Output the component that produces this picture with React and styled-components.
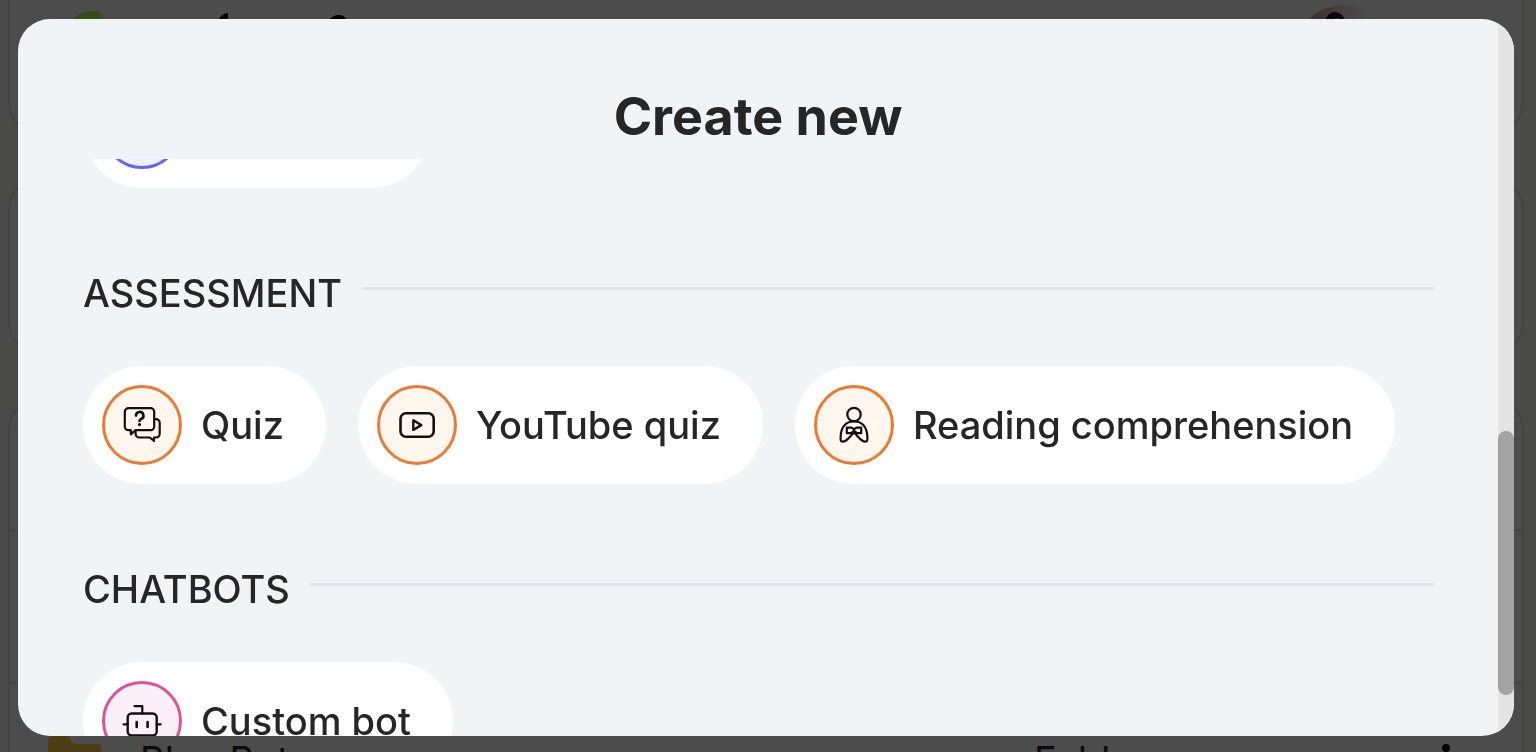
import { useLayoutEffect, useRef } from "react"
import styled, { createGlobalStyle, css } from "styled-components"


const tones = {
  blue: { line: "#6366f1", fill: "#eef0ff" },
  orange: { line: "#e87b35", fill: "#fff7ed" },
  pink: { line: "#dc5299", fill: "#fbf0f7" },
}

const sections = [
  {
    title: "Assessment",
    tone: "orange",
    items: [
      { name: "Quiz", icon: QuizIcon },
      { name: "YouTube quiz", icon: VideoIcon },
      { name: "Reading comprehension", icon: ReaderIcon },
    ],
  },
  {
    title: "Chatbots",
    tone: "pink",
    items: [{ name: "Custom bot", icon: BotIcon }],
  },
]


const App = () => {
  const bodyRef = useRef(null)

  useLayoutEffect(() => {
    bodyRef.current.scrollTop = 89
  }, [])

  return (
    <>
      <GlobalStyle />
      <Page aria-hidden="true">
        <TopCard>
          <Logo />
          <Avatar />
        </TopCard>
        <MiddleCard />
        <ListCard>
          <ListHead />
          <ListRow />
          <ListRow>
            <FolderIcon />
            <RowName>Blue Bot</RowName>
            <RowType>Folder</RowType>
            <DotsIcon />
          </ListRow>
        </ListCard>
      </Page>

      <Backdrop>
        <Dialog role="dialog" aria-modal="true" aria-labelledby="dialog-title">
          <DialogMain>
            <DialogTitle id="dialog-title">Create new</DialogTitle>
            <DialogBody ref={bodyRef}>
              <Items>
                <CreateItem name="Slideshow" icon={SheetIcon} tone="blue" />
              </Items>
              {sections.map(({ title, tone, items }) => (
                <section key={title}>
                  <SectionHead>
                    <SectionTitle>{title}</SectionTitle>
                    <Rule />
                  </SectionHead>
                  <Items>
                    {items.map(item => (
                      <CreateItem key={item.name} tone={tone} {...item} />
                    ))}
                  </Items>
                </section>
              ))}
            </DialogBody>
          </DialogMain>
          <ScrollTrack>
            <ScrollThumb />
          </ScrollTrack>
        </Dialog>
      </Backdrop>
    </>
  )
}

export default App


const CreateItem = ({ name, icon: Icon, tone }) => (
  <Pill type="button">
    <IconCircle $tone={tone}>
      <Icon />
    </IconCircle>
    {name}
  </Pill>
)


function LineIcon({ children }) {
  return (
    <svg
      width="40"
      height="40"
      viewBox="0 0 40 40"
      fill="none"
      stroke="#111"
      strokeWidth="2.2"
      strokeLinecap="round"
      strokeLinejoin="round"
      aria-hidden="true"
    >
      {children}
    </svg>
  )
}

function QuizIcon() {
  return (
    <LineIcon>
      <path d="M6.8 25.2H6.5A3.7 3.7 0 0 1 2.8 21.5V6.9A3.7 3.7 0 0 1 6.5 3.2H28.5A3.7 3.7 0 0 1 32.2 6.9V21.5A3.7 3.7 0 0 1 28.5 25.2H13.6L8.8 29.4V25.2Z" />
      <path d="M32.5 14.2H34A3.7 3.7 0 0 1 37.7 17.9V28.8A3.7 3.7 0 0 1 34 32.5H32V36L27.8 32.5H17.3A3.7 3.7 0 0 1 13.6 28.8V25.5" />
      <path d="M14 10.6A3.7 3.7 0 1 1 18.9 14.1Q17.5 14.7 17.5 16" strokeWidth="2.6" />
      <circle cx="17.5" cy="19.6" r="1.6" fill="#111" stroke="none" />
    </LineIcon>
  )
}

function VideoIcon() {
  return (
    <LineIcon>
      <rect x="3.5" y="8.3" width="33.2" height="23.4" rx="5.5" strokeWidth="2.6" />
      <path d="M16.3 15.3V24.9L24.3 20.1Z" strokeWidth="2.4" />
    </LineIcon>
  )
}

function ReaderIcon() {
  return (
    <LineIcon>
      <circle cx="20" cy="9.5" r="6.7" />
      <path d="M20 27.5C16 31 13 36.7 8.6 36.7C6.3 36.7 6.5 34.4 6.7 31C7.2 22.5 11.5 16.4 20 16.4C28.5 16.4 32.8 22.5 33.3 31C33.5 34.4 33.7 36.7 31.4 36.7C27 36.7 24 31 20 27.5Z" />
      <path d="M12.8 22.6H17.5L20 24.2L22.5 22.6H27.2V28.2H23L20 26L17 28.2H12.8Z" />
    </LineIcon>
  )
}

function BotIcon() {
  return (
    <LineIcon>
      <rect x="5.7" y="12.5" width="29" height="22" rx="4" strokeWidth="2.4" />
      <path d="M12.5 5.2H20.3V12.5M1.5 23.3H5.7M34.7 23.3H38.7" />
      <path d="M14.7 21V26M25.6 21V26" strokeWidth="2.6" />
    </LineIcon>
  )
}

function SheetIcon() {
  return (
    <LineIcon>
      <rect x="8" y="4" width="24" height="32" rx="4" />
      <path d="M14 13H26M14 20H26M14 27H21" />
    </LineIcon>
  )
}

function Logo() {
  return (
    <svg width="300" height="60" viewBox="0 0 300 60">
      <path d="M0 22C8 8 20 1 31 1C38 1 41 4 41 10C41 34 24 48 6 48Z" fill="#b8fa55" />
      <path d="M166 3V40H156V13Q157 4 166 3Z" />
      <path d="M263 22Q265 5 277 5Q286 5 290 22Z" />
    </svg>
  )
}

function Avatar() {
  return (
    <svg width="100" height="100" viewBox="0 0 100 100">
      <defs>
        <linearGradient id="avatar-fill">
          <stop offset="0.2" stopColor="#c9a3a3" />
          <stop offset="0.5" stopColor="#f1dcd8" />
          <stop offset="0.8" stopColor="#fff" />
        </linearGradient>
      </defs>
      <circle cx="50" cy="50" r="50" fill="url(#avatar-fill)" />
      <circle cx="41" cy="17" r="10" fill="#221818" />
      <circle cx="43" cy="18" r="5" fill="#c9a39a" />
    </svg>
  )
}

function FolderIcon() {
  return (
    <svg width="54" height="48" viewBox="0 0 54 48">
      <path d="M5 0H17Q20 0 22 3L24 6Q25 8 28 8H49Q54 8 54 13V43Q54 48 49 48H5Q0 48 0 43V5Q0 0 5 0Z" fill="#ffcf3f" />
    </svg>
  )
}

function DotsIcon() {
  return (
    <svg width="8" height="32" viewBox="0 0 8 32">
      <circle cx="4" cy="4" r="4" />
      <circle cx="4" cy="16" r="4" />
      <circle cx="4" cy="28" r="4" />
    </svg>
  )
}


const GlobalStyle = createGlobalStyle`
  * {
    box-sizing: border-box;
  }

  body {
    margin: 0;
    overflow: hidden;
    font-family: Inter, "Liberation Sans", sans-serif;
    color: #262626;
    background: #f7f7f0;
  }
`

const Page = styled.div`
  display: flex;
  flex-direction: column;
  gap: 44px;
  height: 100vh;
  padding: 0 12px 0 8px;
  overflow: hidden;
`

const card = css`
  flex-shrink: 0;
  border: 2px solid #e2e2e2;
  border-radius: 32px;
  background: #fff;
`

const TopCard = styled.div`
  ${card}
  display: flex;
  align-items: flex-start;
  justify-content: space-between;
  height: 134px;
  padding: 5px 128px 0 52px;
  border-top: 0;
  border-top-left-radius: 0;
  border-top-right-radius: 0;

  svg:first-child {
    margin-top: 5px;
  }
`

const MiddleCard = styled.div`
  ${card}
  height: 176px;
`

const ListCard = styled.div`
  ${card}
`

const ListHead = styled.div`
  height: 129px;
`

const ListRow = styled.div`
  display: flex;
  align-items: center;
  height: 153px;
  padding: 0 72px 0 38px;
  border-top: 2px solid #e2e2e2;
  font-size: 38px;
`

const RowName = styled.span`
  flex: 1;
  padding-left: 38px;
`

const RowType = styled.span`
  flex-basis: 408px;
`

const Backdrop = styled.div`
  position: fixed;
  inset: 0;
  display: flex;
  padding: 19px 22px 16px 18px;
  background: rgba(0, 0, 0, 0.7);
`

const Dialog = styled.div`
  flex: 1;
  display: flex;
  overflow: hidden;
  border-radius: 32px;
  background: #f0f4f7;
`

const DialogMain = styled.div`
  flex: 1;
  display: flex;
  flex-direction: column;
  min-width: 0;
`

const DialogTitle = styled.h1`
  margin: 0;
  padding: 66px 0 10px;
  font-size: 52px;
  line-height: 64px;
  font-weight: 700;
  text-align: center;
`

const DialogBody = styled.div`
  flex: 1;
  min-height: 0;
  padding: 0 64px 64px 65px;
  overflow-y: auto;
  scrollbar-width: none;
`

const SectionHead = styled.div`
  display: flex;
  align-items: center;
  gap: 20px;
  padding: 81px 0 49px;
`

const SectionTitle = styled.h2`
  margin: 0;
  font-size: 38px;
  line-height: 48px;
  font-weight: 500;
  text-transform: uppercase;
`

const Rule = styled.div`
  flex: 1;
  height: 3px;
  margin-bottom: 10px;
  background: #e1e3e8;
`

const Items = styled.div`
  display: flex;
  flex-wrap: wrap;
  gap: 32px;
`

const Pill = styled.button`
  display: flex;
  align-items: center;
  gap: 19px;
  padding: 19px 42px 19px 19px;
  border: 0;
  border-radius: 59px;
  background: #fff;
  color: inherit;
  font-family: inherit;
  font-size: 38px;
  line-height: 48px;
  font-weight: 500;
  white-space: nowrap;
  cursor: pointer;
`

const IconCircle = styled.span`
  display: flex;
  align-items: center;
  justify-content: center;
  width: 80px;
  height: 80px;
  border: 3px solid ${props => tones[props.$tone].line};
  border-radius: 50%;
  background: ${props => tones[props.$tone].fill};
`

const ScrollTrack = styled.div`
  display: flex;
  flex-direction: column;
  justify-content: flex-end;
  width: 16px;
  padding-bottom: 41px;
  background: #e4e4e4;
`

const ScrollThumb = styled.div`
  height: 39%;
  border-radius: 8px;
  background: #a3a3a3;
`
